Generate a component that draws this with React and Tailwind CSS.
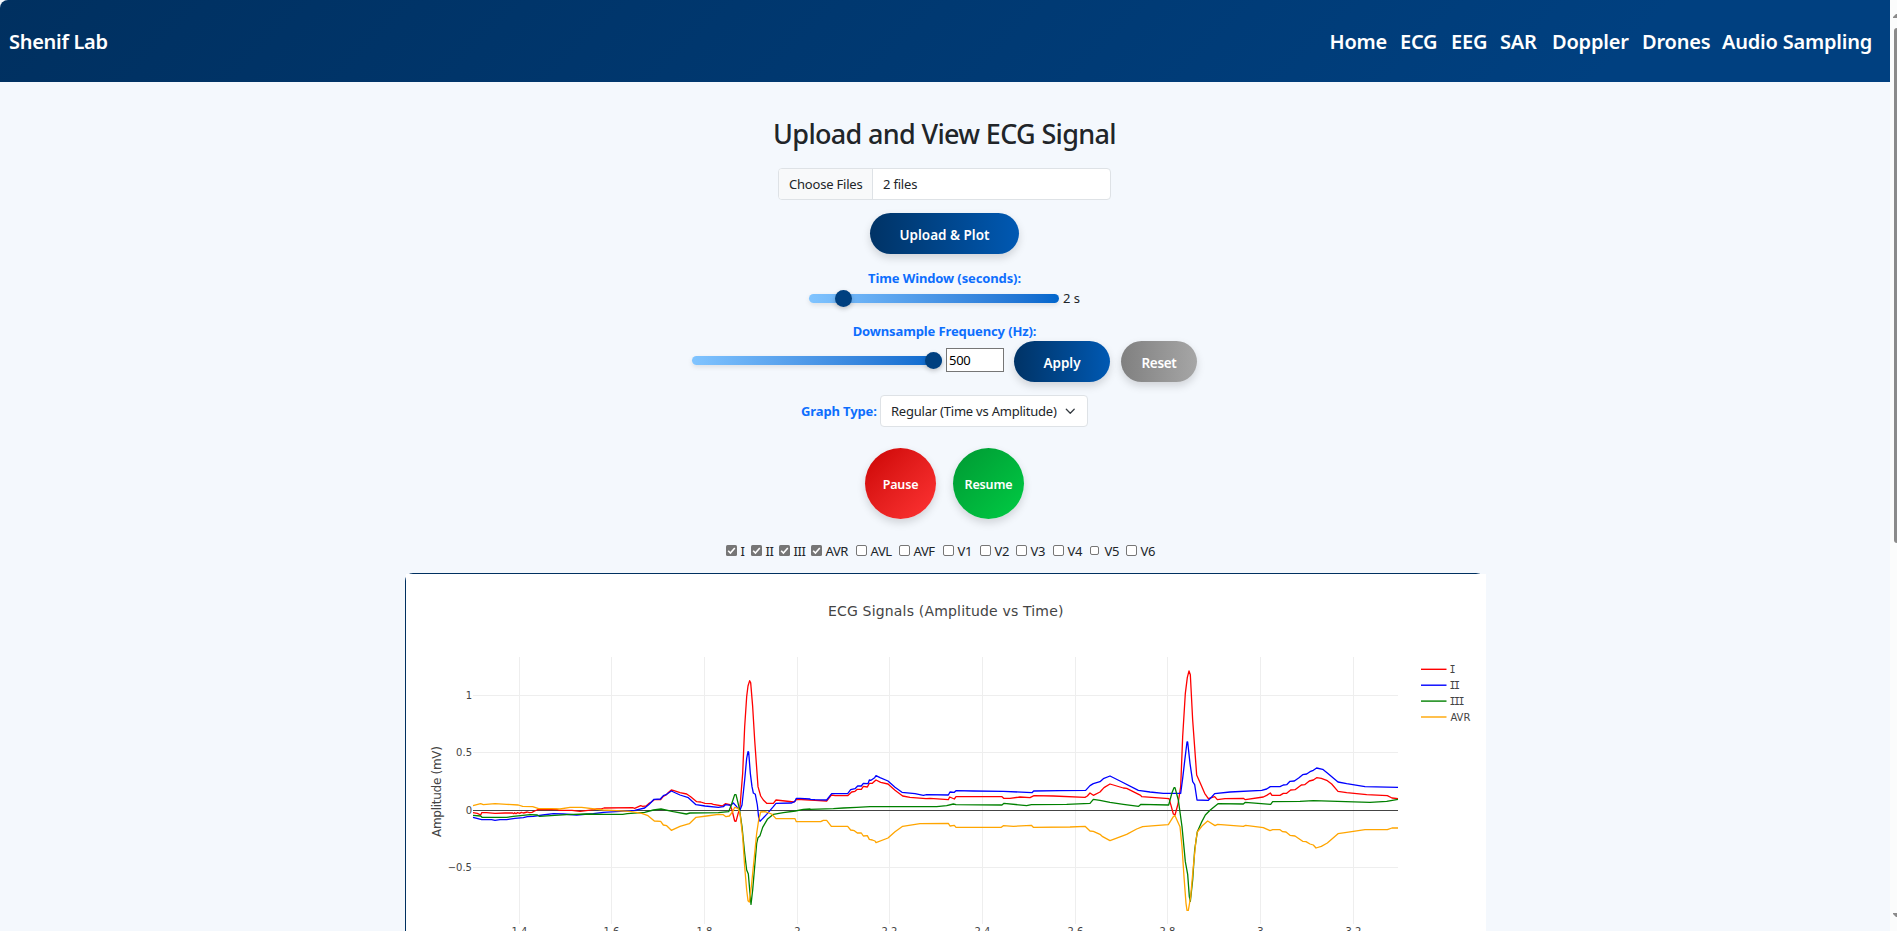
const FONT = "font-['Noto_Sans','Open_Sans',sans-serif]";

// Traces are digitised in thirds of a pixel; each segment carries its own origin.
const seg = (dx, dy, pts) =>
  pts
    .trim()
    .split(/\s+/)
    .map((p) => {
      const [u, v] = p.split(",").map(Number);
      return `${((u + dx) / 3).toFixed(2)},${((v + dy) / 3).toFixed(2)}`;
    })
    .join(" ");

const A = (p) => seg(-48, -42, p);
const B = (p) => seg(1182, 198, p);
const C = (p) => seg(2082, 198, p);

const series = [
  {
    name: "I",
    color: "#ff0000",
    points: [
      A("249,758 262,760 272,765 275,758 290,758 315,760 345,759 368,759 371,761 374,758 378,761 383,758 389,760 394,757 400,759 412,756 418,758 426,757 434,753 444,749 500,748 508,751 546,751 570,754 612,749 620,747 632,747 642,744 728,743 734,745 752,737 758,739 768,738 776,731 784,726 793,719 812,719 820,709 828,705 836,697 844,690 852,692 870,698 890,702 902,710 920,725 932,726 945,730 964,731 970,733 997,738 1006,731 1020,734 1026,750 1034,783 1038,784 1050,740 1058,640 1064,500 1070,410 1074,378 1079,362 1082,368 1088,440 1094,540 1104,680 1112,708 1120,720 1130,730 1150,730 1158,720 1212,726 1220,718 1260,720"),
      B("45,481 80,483 94,465 106,467 143,467 155,456 165,454 172,448 184,448 190,439 202,441 208,430 217,430 228,420 242,427 264,432 285,451 308,468 330,472 378,476 390,475 445,479 449,471 463,477 468,470 606,470 611,475 630,475 660,471 690,473 702,467 760,468 855,472 862,468 870,459 880,466 900,456"),
      C("0,456 12,443 30,432 70,444 80,445 122,466 125,470 165,473 207,476 213,496 220,522 225,525 234,492 242,440 248,290 256,160 262,112 267,93 271,104 278,240 290,405 302,432 314,460 325,476 344,470 352,479 375,476 430,475 436,479 490,471 500,466 511,459 516,466 540,466 550,460 560,460 572,450 585,449 604,435 614,434 628,423 640,420 650,413 664,415 682,422 695,432 714,454 740,458 800,464 862,467 876,474 894,476"),
    ],
  },
  {
    name: "II",
    color: "#0000ff",
    points: [
      A("249,772 275,779 305,779 315,781 330,779 350,779 375,775 400,773 412,770 430,769 458,765 490,761 520,762 560,765 610,761 640,757 690,754 734,751 764,744 776,734 782,728 792,718 811,717 820,707 830,703 844,693 870,705 895,713 918,734 945,738 985,742 1000,740 1006,734 1022,736 1030,729 1040,740 1050,750 1056,735 1064,660 1070,595 1074,575 1076,576 1081,640 1086,680 1090,699 1096,703 1102,735 1106,772 1110,784 1130,763 1150,740 1158,730 1205,729 1215,724 1219,715 1230,715 1260,717"),
      B("30,478 45,479 80,480 95,461 143,461 152,449 165,446 173,438 184,438 190,430 204,431 208,420 213,421 224,413 228,407 240,413 264,423 285,442 306,457 345,461 370,466 380,464 445,465 450,456 463,457 468,452 520,453 610,454 696,458 701,453 780,452 857,451 870,437 880,431 900,425"),
      C("0,425 10,416 30,408 60,423 115,451 150,456 190,460 242,460 248,415 255,355 261,306 263,306 270,370 278,425 284,434 291,480 325,481 335,471 344,461 390,456 485,451 500,447 511,440 540,440 550,435 560,434 570,424 583,423 597,413 608,404 620,402 630,395 640,391 650,384 668,388 682,399 714,426 740,431 795,440 894,442"),
    ],
  },
  {
    name: "III",
    color: "#008000",
    points: [
      A("249,766 272,768 276,772 350,772 370,769 420,764 442,765 448,769 494,766 530,764 590,762 650,763 698,763 712,761 764,757 790,750 813,747 850,755 889,762 900,759 985,758 1016,755 1024,735 1034,704 1038,704 1048,745 1056,800 1064,880 1070,930 1075,942 1080,1000 1083,1033 1088,990 1094,920 1100,850 1104,833 1110,827 1118,802 1132,778 1150,763 1180,758 1216,753 1240,748 1260,747"),
      B("30,508 100,506 130,504 170,502 210,500 260,500 410,500 440,497 460,492 468,494 606,495 612,490 680,497 694,494 800,493 870,490 880,478 900,481"),
      C("0,481 30,487 70,493 116,499 123,493 206,495 216,458 222,443 225,443 235,480 246,560 256,665 263,703 268,770 271,784 278,720 284,630 292,575 304,548 316,525 330,511 354,491 430,492 436,487 512,493 518,485 600,484 640,482 810,487 860,484 894,478"),
    ],
  },
  {
    name: "AVR",
    color: "#ffa500",
    points: [
      A("249,737 272,731 280,734 315,731 350,733 385,735 398,739 428,740 446,746 484,746 510,747 540,742 575,742 640,750 720,754 755,760 774,767 793,783 812,784 820,795 830,797 844,811 870,799 898,791 918,772 950,768 985,763 1000,764 1008,770 1018,768 1028,755 1034,742 1044,745 1050,760 1058,830 1064,920 1070,990 1074,1022 1078,1026 1084,980 1092,900 1100,820 1106,780 1112,756 1125,755 1145,762 1158,776 1215,776 1219,785 1260,785"),
      B("30,545 62,545 70,541 80,541 94,559 143,559 152,570 163,572 172,579 184,579 190,588 202,587 208,598 217,600 225,603 228,608 264,594 285,575 308,559 360,551 445,550 450,558 463,556 468,562 604,562 610,557 640,559 694,556 700,562 810,561 855,559 870,573 880,574 900,583"),
      C("0,583 8,590 30,602 80,583 110,567 128,560 165,557 205,554 220,530 225,527 240,560 246,620 252,710 258,790 261,811 265,811 272,770 280,680 288,600 292,576 306,558 323,543 345,557 353,553 430,559 437,556 490,563 510,572 518,569 540,569 548,575 558,576 570,586 585,588 597,596 608,604 618,605 630,612 640,615 648,624 664,619 682,609 714,581 740,577 795,569 862,569 876,564 894,564"),
    ],
  },
];

const xTicks = [
  [519.5, "1.4"], [611.5, "1.6"], [704.5, "1.8"], [797.5, "2"], [889.5, "2.2"],
  [982.5, "2.4"], [1075.5, "2.6"], [1167.5, "2.8"], [1260.5, "3"], [1353.5, "3.2"],
];
const yTicks = [[121.5, "1"], [178.5, "0.5"], [236.5, "0"], [293.5, "−0.5"]];

function Chart() {
  return (
    <svg width="1080" height="420" viewBox="0 0 1080 420" className="block bg-white font-['DejaVu_Sans',Verdana,sans-serif]">
      <text x="539.7" y="42" textAnchor="middle" textLength="235.5" fontSize="14" fill="#444">
        ECG Signals (Amplitude vs Time)
      </text>
      {xTicks.map(([x, t]) => (
        <g key={t}>
          <path d={`M${x - 406} 83V350`} stroke="#eee" />
          <text x={x - 406} y="361" fontSize="10" textAnchor="middle" fill="#444">{t}</text>
        </g>
      ))}
      {yTicks.map(([y, t]) => (
        <g key={t}>
          <path d={`M67 ${y}H992`} stroke="#eee" />
          <text x="66" y={y + 3.5} fontSize="10" textAnchor="end" fill="#444">{t}</text>
        </g>
      ))}
      <path d="M67 236.5H992" stroke="#444" />
      <text transform="translate(35 217.5) rotate(-90)" textAnchor="middle" textLength="91" fontSize="12" fill="#444">
        Amplitude (mV)
      </text>
      {series.map((s, i) => (
        <g key={s.name}>
          <polyline points={s.points.join(" ")} fill="none" stroke={s.color} strokeWidth="1.3" strokeLinejoin="round" />
          <path d={`M1015 ${95.3 + i * 15.9}H1040.5`} stroke={s.color} strokeWidth="1.4" />
          {s.name === "AVR" ? (
            <text x="1044.4" y={99.3 + i * 15.9} fontSize="10" fill="#444">{s.name}</text>
          ) : (
            <text x="1043.6" y={99.3 + i * 15.9} fontSize="10" fill="#444" className="font-['DejaVu_Sans_Mono',monospace] tracking-[-1.6px]">
              {s.name}
            </text>
          )}
        </g>
      ))}
    </svg>
  );
}

const nav = [
  ["Home", "w-[58px] mr-[12.5px]"],
  ["ECG", "w-[39px] mr-[12px]"],
  ["EEG", "w-[37px] mr-[12px]"],
  ["SAR", "w-[40px] mr-[12px]"],
  ["Doppler", "w-[78px] mr-[12px]"],
  ["Drones", "w-[68px] mr-[12px]"],
  ["Audio Sampling", "w-[151px]"],
];

const leads = [
  ["I", true, "w-[25px]"], ["II", true, "w-[28px]"], ["III", true, "w-[32px]"], ["AVR", true, "w-[45px]"],
  ["AVL", false, "w-[43px]"], ["AVF", false, "w-[44px]"], ["V1", false, "w-[37px]"], ["V2", false, "w-[36px]"],
  ["V3", false, "w-[37px]"], ["V4", false, "w-[37px]"], ["V5", false, "w-[36px]"], ["V6", false, "w-[30px]"],
];

function Lead({ name, checked, width }) {
  return (
    <label className={`flex h-[20px] shrink-0 items-center ${width}`}>
      <span className="flex w-[14.5px] shrink-0">
        {checked ? (
          <svg width="11" height="11" viewBox="0 0 11 11">
            <rect width="11" height="11" rx="1.5" fill="#767676" />
            <path d="M2.2 5.8L4.4 8L8.8 3" fill="none" stroke="#fff" strokeWidth="1.6" />
          </svg>
        ) : (
          <span className={`rounded-[2px] border border-[#767676] bg-white ${name === "V5" ? "size-[9px]" : "size-[11px]"}`} />
        )}
      </span>
      <span className="pt-[1px] text-[13px] leading-[20px] tracking-[-0.4px]">{name}</span>
    </label>
  );
}

function Slider({ thumb }) {
  return (
    <div className="relative h-[9px] w-[250px] rounded-[5px] bg-linear-to-r from-[#80c4ff] to-[#0066cc] shadow-[0_2px_5px_rgba(0,0,0,0.1)]">
      <span className={`absolute -top-[4px] size-[17px] rounded-full bg-[#004080] shadow-[0_2px_5px_rgba(0,0,0,0.2)] ${thumb}`} />
    </div>
  );
}

const pill = "flex h-[41px] items-center justify-center rounded-full pt-[3px] text-[13.5px] font-semibold text-white shadow-[0_4px_8px_rgba(0,0,0,0.15)]";
const label = "whitespace-nowrap text-[13px] leading-[20px] font-bold tracking-[-0.12px] text-[#0d6efd]";

export default function App() {
  return (
    <div className={`flex h-[931px] w-[1897px] overflow-hidden bg-[#fbfcfc] text-[#212529] ${FONT}`}>
      <div className="flex h-[931px] w-[1890px] shrink-0 flex-col bg-[#f4f8fd]">
        <header className="flex h-[82px] shrink-0 items-center justify-between rounded-tl-[8px] bg-linear-135 from-[#003060] to-[#004080] to-85% pt-[1px] pr-[17px] pl-[9px] text-[20px] font-semibold whitespace-nowrap text-white">
          <span className="tracking-[-0.3px]">Shenif Lab</span>
          <nav className="flex">
            {nav.map(([t, w]) => (
              <a key={t} className={`tracking-[-0.2px] ${w}`}>{t}</a>
            ))}
          </nav>
        </header>

        <main className="flex w-[1889px] flex-col items-center">
          <h2 className="mt-[32px] text-[27px] leading-[40px] font-medium tracking-[-0.67px]">Upload and View ECG Signal</h2>

          <div className="mt-[14px] flex h-[32px] w-[333px] overflow-hidden rounded-[4px] border border-[#dee2e6] bg-white text-[13px] leading-[31px]">
            <span className="w-[94px] border-r border-[#dee2e6] bg-[#f8f9fa] pl-[10px] tracking-[-0.2px]">Choose Files</span>
            <span className="pl-[10px] tracking-[-0.2px]">2 files</span>
          </div>

          <button className={`${pill} mt-[13px] w-[149px] bg-linear-to-r from-[#003366] to-[#0059b3]`}>Upload &amp; Plot</button>

          <div className={`${label} mt-[14px]`}>Time Window (seconds):</div>
          <div className="flex h-[20px] w-[271px] items-center">
            <Slider thumb="left-[26px]" />
            <span className="ml-[4px] pt-[1px] text-[13px] whitespace-nowrap">2 s</span>
          </div>

          <div className={`${label} mt-[13px]`}>Downsample Frequency (Hz):</div>
          <div className="flex h-[41px] w-[505px]">
            <div className="pt-[15px]"><Slider thumb="left-[233px]" /></div>
            <div className="mt-[7px] ml-[4px] h-[24px] w-[58px] border border-[#767676] bg-white pl-[2px] text-[13px] leading-[23px] tracking-[-0.3px] text-black">500</div>
            <button className={`${pill} ml-[10px] w-[96px] bg-linear-to-r from-[#003366] to-[#0059b3]`}>Apply</button>
            <button className={`${pill} ml-[11px] w-[76px] bg-linear-to-r from-[#808080] to-[#a6a6a6] tracking-[-0.3px]`}>Reset</button>
          </div>

          <div className="mt-[13px] flex h-[32px] w-[287px] items-center justify-between">
            <span className={label}>Graph Type:</span>
            <div className="flex h-[32px] w-[208px] items-center justify-between rounded-[4px] border border-[#dee2e6] bg-white pr-[12px] pl-[10px] text-[13px] whitespace-nowrap">
              <span className="pt-[1px] tracking-[-0.22px]">Regular (Time vs Amplitude)</span>
              <svg width="10.5" height="10.5" viewBox="0 0 16 16" fill="none" stroke="#343a40" strokeWidth="1.9" strokeLinecap="round" strokeLinejoin="round">
                <path d="m2 5 6 6 6-6" />
              </svg>
            </div>
          </div>

          <div className="mt-[21px] flex gap-[17px] text-[12.5px] font-semibold tracking-[-0.15px] text-white">
            <button className="size-[71px] rounded-full bg-linear-135 from-[#cc0000] to-[#ff3333] pt-[3px] shadow-[0_4px_8px_rgba(0,0,0,0.15)]">Pause</button>
            <button className="size-[71px] rounded-full bg-linear-135 from-[#009933] to-[#00cc44] pt-[3px] shadow-[0_4px_8px_rgba(0,0,0,0.15)]">Resume</button>
          </div>

          <div className="mt-[21px] flex h-[20px] w-[437px] items-center">
            {leads.map(([n, c, w]) => (
              <Lead key={n} name={n} checked={c} width={w} />
            ))}
          </div>

          <div className="mt-[13px] ml-[2px] h-[358px] w-[1081px] rounded-tl-[8px] rounded-tr-[10px] border-t border-l border-[#003060]">
            <Chart />
          </div>
        </main>
      </div>

      <div className="flex h-[931px] w-[7px] shrink-0 flex-col items-end pt-[14px]">
        <svg width="4" height="4" viewBox="0 0 4 4" fill="#8b8b8b"><path d="M0 4V3L3 0H4V4Z" /></svg>
        <div className="mt-[10px] h-[515px] w-[3px] rounded-tl-[3px] rounded-bl-[3px] bg-[#8b8b8b]" />
        <svg className="mt-[370px]" width="4" height="4" viewBox="0 0 4 4" fill="#8b8b8b"><path d="M0 0H4V4H3L0 1Z" /></svg>
      </div>
    </div>
  );
}
